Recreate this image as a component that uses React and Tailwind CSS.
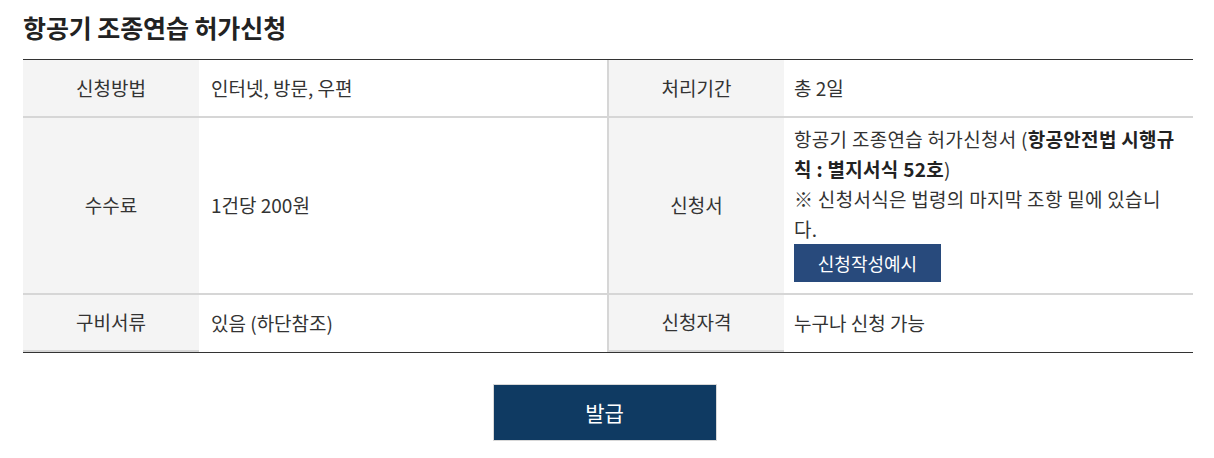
const FONT = { fontFamily: '"Noto Sans CJK KR", "Noto Sans", sans-serif' };

const Th = ({ children, divider, last }) => (
  <div
    className={
      "flex items-center justify-center bg-[#f4f4f4] text-[19px] text-[#333]" +
      (divider ? " border-l-2 border-[#d6d6d6]" : "") +
      (last ? " border-b-2 border-b-[#d6d6d6]" : "")
    }
  >
    {children}
  </div>
);

const Td = ({ children, className = "" }) => (
  <div className={"flex items-center px-3 text-[19px] text-[#333] " + className}>{children}</div>
);

export default function App() {
  return (
    <div className="min-h-screen bg-white pt-[9px]" style={FONT}>
      <div className="ml-[23px] w-[1170px]">
        <h1 className="text-[25px] leading-[36px] font-bold text-[#222] tracking-[-0.1px]">
          항공기 조종연습 허가신청
        </h1>

        <div className="mt-[14px] border-t border-b border-[#333]">
          {/* row 1 */}
          <div className="grid grid-cols-[176px_408px_177px_409px] h-[58px] border-b-2 border-[#d6d6d6]">
            <Th>신청방법</Th>
            <Td>인터넷, 방문, 우편</Td>
            <Th divider>처리기간</Th>
            <Td className="px-[10px]">총 2일</Td>
          </div>

          {/* row 2 */}
          <div className="grid grid-cols-[176px_408px_177px_409px] h-[177px] border-b-2 border-[#d6d6d6]">
            <Th>수수료</Th>
            <Td>1건당 200원</Td>
            <Th divider>신청서</Th>
            <div className="pl-[10px] pr-[14px] pt-[6px] pb-[10px] text-[19px] leading-[30px] tracking-[0.3px] text-[#333] break-all">
              <p>
                항공기 조종연습 허가신청서 (<b className="font-bold text-[#222]">항공안전법 시행규칙 : 별지서식 52호</b>)
              </p>
              <p>※ 신청서식은 법령의 마지막 조항 밑에 있습니다.</p>
              <button className="h-[38px] w-[147px] bg-[#284a7c] text-[18px] tracking-normal text-white">
                신청작성예시
              </button>
            </div>
          </div>

          {/* row 3 */}
          <div className="grid grid-cols-[176px_408px_177px_409px] h-[57px]">
            <Th last>구비서류</Th>
            <Td>있음 (하단참조)</Td>
            <Th divider last>신청자격</Th>
            <Td className="px-[10px]">누구나 신청 가능</Td>
          </div>
        </div>

        <div className="mt-[31px] flex justify-center pr-[7px]">
          <button className="h-[57px] w-[224px] border border-[#d8d8d8] bg-[#0f3a62] text-[21px] text-white">
            발급
          </button>
        </div>
      </div>
    </div>
  );
}
